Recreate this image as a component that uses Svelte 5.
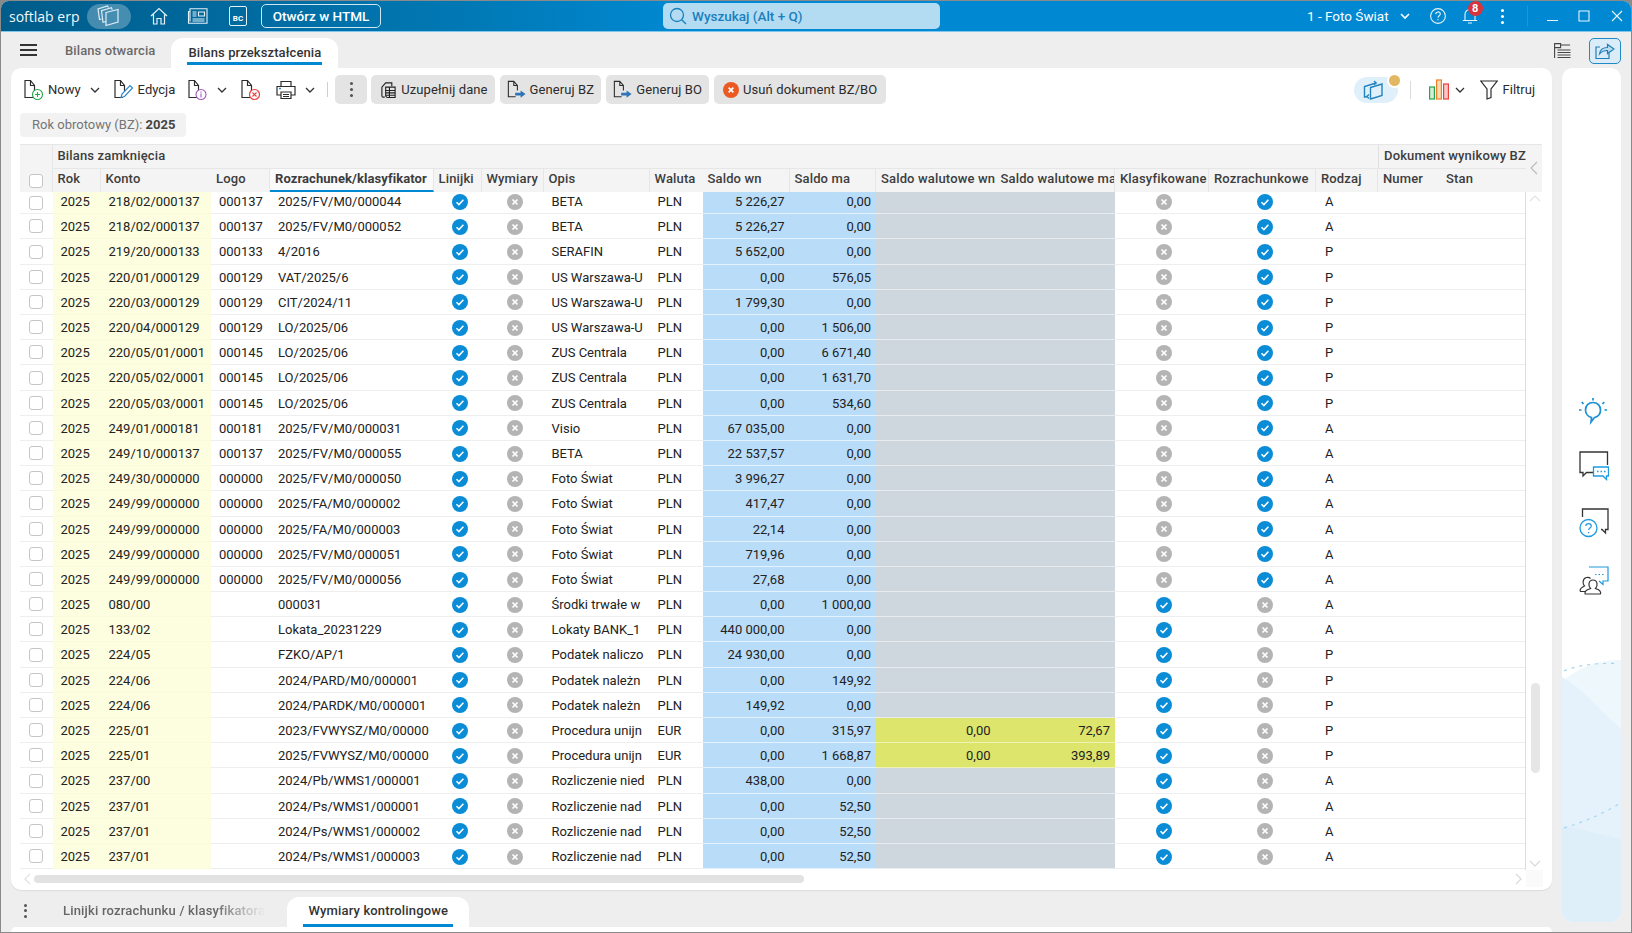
<script lang="ts">
    type Row = {
        konto: string; logo: string; rozr: string; opis: string; wal: string;
        wn: string; ma: string; wwn?: string; wma?: string; klas: boolean; rodzaj: string;
    };

    const r = (konto: string, logo: string, rozr: string, opis: string, wn: string, ma: string, rodzaj: string): Row =>
        ({ konto, logo, rozr, opis, wal: 'PLN', wn, ma, klas: logo === '', rodzaj });

    const rows: Row[] = [
        r('218/02/000137', '000137', '2025/FV/M0/000044', 'BETA', '5 226,27', '0,00', 'A'),
        r('218/02/000137', '000137', '2025/FV/M0/000052', 'BETA', '5 226,27', '0,00', 'A'),
        r('219/20/000133', '000133', '4/2016', 'SERAFIN', '5 652,00', '0,00', 'P'),
        r('220/01/000129', '000129', 'VAT/2025/6', 'US Warszawa-U', '0,00', '576,05', 'P'),
        r('220/03/000129', '000129', 'CIT/2024/11', 'US Warszawa-U', '1 799,30', '0,00', 'P'),
        r('220/04/000129', '000129', 'LO/2025/06', 'US Warszawa-U', '0,00', '1 506,00', 'P'),
        r('220/05/01/0001', '000145', 'LO/2025/06', 'ZUS Centrala', '0,00', '6 671,40', 'P'),
        r('220/05/02/0001', '000145', 'LO/2025/06', 'ZUS Centrala', '0,00', '1 631,70', 'P'),
        r('220/05/03/0001', '000145', 'LO/2025/06', 'ZUS Centrala', '0,00', '534,60', 'P'),
        r('249/01/000181', '000181', '2025/FV/M0/000031', 'Visio', '67 035,00', '0,00', 'A'),
        r('249/10/000137', '000137', '2025/FV/M0/000055', 'BETA', '22 537,57', '0,00', 'A'),
        r('249/30/000000', '000000', '2025/FV/M0/000050', 'Foto Świat', '3 996,27', '0,00', 'A'),
        r('249/99/000000', '000000', '2025/FA/M0/000002', 'Foto Świat', '417,47', '0,00', 'A'),
        r('249/99/000000', '000000', '2025/FA/M0/000003', 'Foto Świat', '22,14', '0,00', 'A'),
        r('249/99/000000', '000000', '2025/FV/M0/000051', 'Foto Świat', '719,96', '0,00', 'A'),
        r('249/99/000000', '000000', '2025/FV/M0/000056', 'Foto Świat', '27,68', '0,00', 'A'),
        r('080/00', '', '000031', 'Środki trwałe w', '0,00', '1 000,00', 'A'),
        r('133/02', '', 'Lokata_20231229', 'Lokaty BANK_1', '440 000,00', '0,00', 'A'),
        r('224/05', '', 'FZKO/AP/1', 'Podatek naliczo', '24 930,00', '0,00', 'P'),
        r('224/06', '', '2024/PARD/M0/000001', 'Podatek należn', '0,00', '149,92', 'P'),
        r('224/06', '', '2024/PARDK/M0/000001', 'Podatek należn', '149,92', '0,00', 'P'),
        { ...r('225/01', '', '2023/FVWYSZ/M0/00000', 'Procedura unijn', '0,00', '315,97', 'P'), wal: 'EUR', wwn: '0,00', wma: '72,67' },
        { ...r('225/01', '', '2025/FVWYSZ/M0/00000', 'Procedura unijn', '0,00', '1 668,87', 'P'), wal: 'EUR', wwn: '0,00', wma: '393,89' },
        r('237/00', '', '2024/Pb/WMS1/000001', 'Rozliczenie nied', '438,00', '0,00', 'A'),
        r('237/01', '', '2024/Ps/WMS1/000001', 'Rozliczenie nad', '0,00', '52,50', 'A'),
        r('237/01', '', '2024/Ps/WMS1/000002', 'Rozliczenie nad', '0,00', '52,50', 'A'),
        r('237/01', '', '2024/Ps/WMS1/000003', 'Rozliczenie nad', '0,00', '52,50', 'A')
    ];

    const columns = [
        ['Rok', ''], ['Konto', 'nosep'], ['Logo', ''], ['Rozrachunek/klasyfikator', 'sorted'], ['Linijki', ''],
        ['Wymiary', ''], ['Opis', ''], ['Waluta', 'nosep'], ['Saldo wn', ''], ['Saldo ma', ''],
        ['Saldo walutowe wn', 'nosep'], ['Saldo walutowe ma', ''], ['Klasyfikowane', ''], ['Rozrachunkowe', ''],
        ['Rodzaj', ''], ['Numer', 'nosep'], ['Stan', 'nosep']
    ];
</script>

{#snippet chevron()}
    <svg class="chev" width="10" height="6" viewBox="0 0 10 6"><path d="M1 1l4 4 4-4" fill="none" stroke="#333" stroke-width="1.300"/></svg>
{/snippet}

{#snippet page()}
    <path d="M10.500 12V6.500L6.500 1.500H1v17h8M6.500 1.500v5h4" fill="none" stroke="#2c2c2c" stroke-width="1.200"/>
{/snippet}

{#snippet docarrow()}
    <svg width="19" height="22" viewBox="0 0 21 23">
        <path d="M11.500 12V6.500L7.500 2H1.500v17h8M7.500 2v4.500h4" fill="none" stroke="#2c2c2c" stroke-width="1.200"/>
        <path d="M9 14.500h6V12l5.500 4-5.500 4v-2.500H9z" fill="#2e74b8"/>
    </svg>
{/snippet}

{#snippet ok()}
    <svg class="st" width="16" height="16" viewBox="0 0 16 16"><circle cx="8" cy="8" r="8" fill="#0a8cd6"/><path d="M4.500 8.300l2.400 2.300 4.500-4.800" fill="none" stroke="#fff" stroke-width="1.500"/></svg>
{/snippet}

{#snippet no()}
    <svg class="st" width="16" height="16" viewBox="0 0 16 16"><circle cx="8" cy="8" r="8" fill="#b4b4b4"/><path d="M5.500 5.500l5 5m0-5l-5 5" fill="none" stroke="#fff" stroke-width="1.700"/></svg>
{/snippet}

<div class="app">
    <div class="win">
        <header class="top">
            <span class="logo">softlab erp</span>
            <span class="pill">
                <svg width="28" height="24" viewBox="0 0 28 24" fill="none" stroke="#dcecf5" stroke-width="1.200">
                    <path d="M11 8.500l12-3v12.500l-12 3.500z"/>
                    <path d="M11 17.500l-3 .8-1.500-11.500 10-3 .7 2"/>
                    <path d="M6.500 15l-2 .5-1.500-10.500 9.500-3 1 1.500"/>
                </svg>
            </span>
            <svg class="ti home" width="18" height="18" viewBox="0 0 18 18" fill="none" stroke="#e4f1f8" stroke-width="1.200"><path d="M1 9l8-7.500L17 9M3.500 7.500V17h3.500v-5.500h4V17h3.500V7.500"/></svg>
            <svg class="ti news" width="21" height="16" viewBox="0 0 21 16" fill="none" stroke="#e4f1f8" stroke-width="1.100"><path d="M3 .8h17v14.400H1.500V3.500H3zM3 3.500v10"/><path d="M11.500 4h6v4h-6zM5.500 4h4M5.500 6h4M5.500 8h4M5.500 11h12M5.500 13h12"/></svg>
            <span class="bc">BC</span>
            <button class="html">Otwórz w HTML</button>
            <div class="search">
                <svg width="18" height="18" viewBox="0 0 18 18" fill="none" stroke="#1a80bd" stroke-width="1.300"><circle cx="8" cy="8" r="6.500"/><path d="M12.700 12.700l4.300 4.300"/></svg>
                <span>Wyszukaj (Alt + Q)</span>
            </div>
            <div class="top-right">
                <span class="company">1 - Foto Świat</span>
                <svg class="c1" width="10" height="7" viewBox="0 0 10 7"><path d="M1 1l4 4 4-4" fill="none" stroke="#fff" stroke-width="1.600"/></svg>
                <svg class="c2" width="16" height="16" viewBox="0 0 16 16" fill="none" stroke="#e8f4fb" stroke-width="1.100"><circle cx="8" cy="8" r="7.400"/><path d="M5.800 6.200c0-3 4.500-3 4.500-.2 0 1.800-2.300 1.800-2.300 3.800M8 11v1.300"/></svg>
                <span class="bell">
                    <svg width="16" height="18" viewBox="0 0 16 18" fill="none" stroke="#e8f4fb" stroke-width="1.100"><path d="M3 13V7.500C3 4.500 5 2.500 8 2.500s5 2 5 5V13M.8 13.500h14.400M6 16h4"/></svg>
                    <b>8</b>
                </span>
                <span class="vdots"><i></i><i></i><i></i></span>
                <span class="vsep"></span>
                <svg class="w1" width="12" height="12" viewBox="0 0 12 12"><path d="M0 10.500h11" stroke="#e8f4fb" stroke-width="1.100"/></svg>
                <svg class="w2" width="12" height="12" viewBox="0 0 12 12"><path d="M1 1h10v10H1z" fill="none" stroke="#e8f4fb" stroke-width="1.100"/></svg>
                <svg class="w3" width="12" height="12" viewBox="0 0 12 12"><path d="M1 1l10 10m0-10L1 11" fill="none" stroke="#e8f4fb" stroke-width="1.100"/></svg>
            </div>
        </header>

        <nav class="tabs">
            <span class="burger"><i></i><i></i><i></i></span>
            <span class="tab">Bilans otwarcia</span>
            <span class="tab active"><span>Bilans przekształcenia</span></span>
            <svg class="tree" width="17" height="16" viewBox="0 0 17 16" fill="none" stroke="#444" stroke-width="1.100"><path d="M.6 .6h6v4h-6zM6.600 2h9.500M.6 4.600V15M3.500 7h13M3.500 9.500h13M3.500 12h13M3.500 14.500h13"/></svg>
            <span class="share">
                <svg width="20" height="18" viewBox="0 0 20 18" fill="none" stroke="#1f7fb8" stroke-width="1.200"><path d="M14 11v5.500H1V5h4"/><path d="M4.500 12c.5-4 3.500-6.500 8-6.500V2.500L19 7l-6.500 4.500V8.500c-3.500 0-6 1-8 3.500z" fill="#bcdcf0"/></svg>
            </span>
        </nav>

        <div class="work">
            <div class="left">
                <section class="panel">
                    <div class="toolbar">
                        <span class="item first">
                            <svg width="20" height="22" viewBox="0 0 20 22">
                                {@render page()}
                                <circle cx="13.500" cy="15.500" r="5" fill="#fff" stroke="#22a84a" stroke-width="1.100"/>
                                <path d="M13.500 13v5M11 15.500h5" stroke="#22a84a" stroke-width="1.100"/>
                            </svg>
                            Nowy
                        </span>
                        {@render chevron()}
                        <span class="item edit">
                            <svg width="20" height="22" viewBox="0 0 20 22">
                                {@render page()}
                                <path d="M7 18.500l1-3.500 8-8.500 2.500 2.500-8 8.500z" fill="#fff" stroke="#2d86cc" stroke-width="1.200"/>
                            </svg>
                            Edycja
                        </span>
                        <span class="item info">
                            <svg width="20" height="22" viewBox="0 0 20 22">
                                {@render page()}
                                <circle cx="13" cy="15.500" r="5" fill="#fff" stroke="#a258b8" stroke-width="1.100"/>
                                <path d="M13 14.500v4M13 12.500v1.200" stroke="#a258b8" stroke-width="1.100"/>
                            </svg>
                        </span>
                        {@render chevron()}
                        <span class="item del">
                            <svg width="20" height="22" viewBox="0 0 20 22">
                                {@render page()}
                                <circle cx="13.500" cy="15.500" r="5" fill="#fff" stroke="#e8413e" stroke-width="1.200"/>
                                <path d="M11.500 13.500l4 4m0-4l-4 4" stroke="#e8413e" stroke-width="1.200"/>
                            </svg>
                        </span>
                        <span class="item print">
                            <svg width="20" height="20" viewBox="0 0 20 20" fill="none" stroke="#2c2c2c" stroke-width="1.200">
                                <path d="M5 6V1.500h10V6M5 15H1V6.500h18V15h-4"/>
                                <path d="M5 12h10v6.500H5zM7 14.500h6M7 16.500h6"/>
                                <path d="M3 8.500h2" stroke="#2d86cc" stroke-width="1.500"/>
                            </svg>
                        </span>
                        {@render chevron()}
                        <span class="tsep"></span>
                        <button class="btn dots"><span class="vdots dark"><i></i><i></i><i></i></span></button>
                        <button class="btn fill">
                            <svg width="17" height="18" viewBox="0 0 18 18" fill="none" stroke="#222" stroke-width="1.200"><path d="M5 16.500H3.500c-1 0-1.500-.5-1.500-1.500V6l4-4.500h6.500V5"/><path d="M6 6h10v11H7.500L6 15.500zM6 9.500h10M6 12h10M6 14.500h10M10 6v11"/></svg>
                            Uzupełnij dane
                        </button>
                        <button class="btn gen">
                            {@render docarrow()}
                            Generuj BZ
                        </button>
                        <button class="btn gen">
                            {@render docarrow()}
                            Generuj BO
                        </button>
                        <button class="btn rem">
                            <svg width="16" height="16" viewBox="0 0 17 17"><circle cx="8.500" cy="8.500" r="8.500" fill="#ea5a22"/><path d="M6 6l5 5m0-5l-5 5" stroke="#fff" stroke-width="1.800"/></svg>
                            Usuń dokument BZ/BO
                        </button>

                        <span class="spring"></span>
                        <span class="view">
                            <svg width="24" height="24" viewBox="0 0 24 24" fill="none" stroke="#2483bd" stroke-width="1.400">
                                <path d="M9.500 9.500L21 6v11.500L9.500 21z"/>
                                <path d="M6 18.500l-2.500.7V8.500L15 5"/>
                                <path d="M13 3l2.200 2L13 6.800M8 16.500L5.800 18.500 8 20.500"/>
                            </svg>
                            <i class="dot"></i>
                        </span>
                        <span class="tsep right"></span>
                        <svg class="chart" width="20" height="21" viewBox="0 0 20 21" stroke-width="1.200">
                            <rect x=".6" y="8" width="4.800" height="12" fill="#d6eed9" stroke="#22a84a"/>
                            <rect x="7.600" y="1" width="4.800" height="19" fill="#fbdcb8" stroke="#f07f25"/>
                            <rect x="14.600" y="5" width="4.800" height="15" fill="#f9c9c9" stroke="#e8413e"/>
                        </svg>
                        {@render chevron()}
                        <span class="item filter">
                            <svg width="18" height="20" viewBox="0 0 18 20" fill="none" stroke="#2c2c2c" stroke-width="1.200"><path d="M.8 1h16.400L11 9v8.500l-4 1.500V9z"/></svg>
                            Filtruj
                        </span>
                    </div>

                    <div class="chip">Rok obrotowy (BZ): <b>2025</b></div>

                    <div class="tbl">
                        <div class="head">
                            <div class="h-check"><span class="cb"></span></div>
                            <div class="group g1">Bilans zamknięcia</div>
                            <div class="group g2">Dokument wynikowy BZ</div>
                            <div class="h-nav">
                                <svg width="8" height="14" viewBox="0 0 8 14"><path d="M7 1L1 7l6 6" fill="none" stroke="#bbb" stroke-width="1.200"/></svg>
                            </div>
                            {#each columns as [label, kind]}
                                <div class="hc {kind}">{label}</div>
                            {/each}
                        </div>
                        <div class="mid">
                            <div class="rows">
                                {#each rows as row}
                                    <div class="row">
                                        <div class="c chk"><span class="cb"></span></div>
                                        <div class="c y">2025</div>
                                        <div class="c y">{row.konto}</div>
                                        <div class="c">{row.logo}</div>
                                        <div class="c">{row.rozr}</div>
                                        <div class="c ic">{@render ok()}</div>
                                        <div class="c ic">{@render no()}</div>
                                        <div class="c">{row.opis}</div>
                                        <div class="c">{row.wal}</div>
                                        <div class="c num b">{row.wn}</div>
                                        <div class="c num b">{row.ma}</div>
                                        <div class="c num {row.wwn ? 'lime' : 'grey'}">{row.wwn ?? ''}</div>
                                        <div class="c num {row.wma ? 'lime' : 'grey'}">{row.wma ?? ''}</div>
                                        <div class="c ic">{#if row.klas}{@render ok()}{:else}{@render no()}{/if}</div>
                                        <div class="c ic">{#if row.klas}{@render no()}{:else}{@render ok()}{/if}</div>
                                        <div class="c rodz">{row.rodzaj}</div>
                                        <div class="c"></div>
                                        <div class="c"></div>
                                    </div>
                                {/each}
                            </div>
                            <div class="vs">
                                <svg width="12" height="7" viewBox="0 0 12 7"><path d="M1 6l5-5 5 5" fill="none" stroke="#e2e2e2" stroke-width="1.200"/></svg>
                                <span class="thumb"></span>
                                <svg width="12" height="7" viewBox="0 0 12 7"><path d="M1 1l5 5 5-5" fill="none" stroke="#d8d8d8" stroke-width="1.200"/></svg>
                            </div>
                        </div>
                        <div class="hs">
                            <svg width="7" height="12" viewBox="0 0 7 12"><path d="M6 1L1 6l5 5" fill="none" stroke="#e2e2e2" stroke-width="1.200"/></svg>
                            <span class="hthumb"></span>
                            <svg class="hr" width="7" height="12" viewBox="0 0 7 12"><path d="M1 1l5 5-5 5" fill="none" stroke="#d8d8d8" stroke-width="1.200"/></svg>
                            <span class="corner"></span>
                        </div>
                    </div>
                </section>

                <div class="btabs">
                    <span class="vdots dark small"><i></i><i></i><i></i></span>
                    <span class="btab fade">Linijki rozrachunku / klasyfikatora</span>
                    <span class="btab active"><span>Wymiary kontrolingowe</span></span>
                </div>
                <div class="stub"></div>
            </div>

            <aside class="side">
                <svg class="s1" width="30" height="28" viewBox="0 0 30 28" fill="none" stroke="#1d8fd6" stroke-width="1.700">
                    <path d="M15 3.500V1M5.500 7L3.800 5M24.500 7l1.700-2M1 13h2.500M26.500 13H29"/>
                    <path d="M15 5.500c-4.500 0-7.500 3.200-7.500 7.500 0 4 3 6.800 6 7.500L13 25l3.500-4.500c3.500-.8 6-3.500 6-7.500 0-4.300-3-7.500-7.500-7.500z"/>
                </svg>
                <svg class="s2" width="30" height="30" viewBox="0 0 30 30" fill="none">
                    <path d="M14 21.500H7.500L4 25v-3.500H1V1h27.500v13" stroke="#333" stroke-width="1.300"/>
                    <path d="M14.500 16h15v9h-2v3.500L24 25h-9.500z" fill="#fff" stroke="#1d9ae0" stroke-width="1.300"/>
                    <path d="M18 20.500h1.500M21.500 20.500H23M25 20.500h1.500" stroke="#1d9ae0" stroke-width="1.300"/>
                </svg>
                <svg class="s3" width="30" height="30" viewBox="0 0 30 30" fill="none">
                    <path d="M3.500 9V1h25.500v20.500h-2.500V25l-3.500-3.500h-1" stroke="#333" stroke-width="1.300"/>
                    <circle cx="9.500" cy="20" r="8.500" fill="#fff" stroke="#1d9ae0" stroke-width="1.300"/>
                    <path d="M6.800 18c0-3.300 5.500-3.300 5.500 0 0 2-2.700 2-2.700 4M9.600 24v1.200" stroke="#1d9ae0" stroke-width="1.200"/>
                </svg>
                <svg class="s4" width="30" height="30" viewBox="0 0 30 30" fill="none">
                    <path d="M10 1h19v14h-5v3.500l-4-3.500" fill="#fff" stroke="#1d9ae0" stroke-width="1.200"/>
                    <path d="M16 8.500h1.500M19.500 8.500H21M23 8.500h1.500" stroke="#1d9ae0" stroke-width="1.200"/>
                    <path d="M6 25.500H2c-1.500 0-1-3 1-4l2.500-1.500c-2-2-2.300-7.500 2-8.500 2-.5 3.500.5 4 1" stroke="#333" stroke-width="1.200"/>
                    <path d="M6.500 28h14.500c1 0 1-3-1.500-4.200l-3-1.300c2.500-2.500 2.300-8.500-2.500-8.500s-5 6-2.500 8.500l-3.500 1.500C6 25 5.500 28 6.500 28z" fill="#fff" stroke="#333" stroke-width="1.200"/>
                </svg>
                <svg class="waves" width="59" height="262" viewBox="0 0 59 262" preserveAspectRatio="none">
                    <path d="M0 22C15 8 35 0 59 0v262H0z" fill="#eef7fc"/>
                    <path d="M0 17c22 12 40 36 59 52v193H0z" fill="#e5f2fb"/>
                    <path d="M0 165l59 14v83H0z" fill="#dfeff9"/>
                    <path d="M2 11C18 4 38 3 57 3.500M2 168c20-6 38-14 55-24" fill="none" stroke="#9fd4f2" stroke-width="1.100" stroke-dasharray="3 5"/>
                </svg>
            </aside>
        </div>
    </div>
</div>

<style>
    :global(body) {
        margin: 0;
        background: #8a8a8a;
    }

    .app {
        width: 1632px;
        height: 933px;
        padding: 1px;
        box-sizing: border-box;
        font-family: Roboto, "Liberation Sans", sans-serif;
        font-size: 13px;
        color: #222;
        overflow: hidden;
    }

    .win {
        height: 931px;
        background: #eeeeee;
        border-radius: 8px 8px 0 0;
        overflow: hidden;
        display: flex;
        flex-direction: column;
    }

    .top {
        height: 31px;
        flex: none;
        box-sizing: border-box;
        display: flex;
        align-items: center;
        background: linear-gradient(90deg, #005c8a 0%, #0178b4 28%, #0089d2 42%, #0089d2 100%);
        border-bottom: 1px solid #7fc6ec;
        color: #fff;
        position: relative;
    }

    .logo {
        font-family: "Open Sans", sans-serif;
        font-size: 14px;
        margin-left: 8px;
        width: 78px;
        white-space: nowrap;
        color: #f2f8fb;
    }

    .pill {
        width: 44px;
        height: 25px;
        border-radius: 13px;
        background: rgba(255, 255, 255, 0.27);
        display: flex;
        align-items: center;
        justify-content: center;
    }

    .ti.home {
        margin-left: 19px;
    }

    .ti.news {
        margin-left: 19px;
    }

    .bc {
        width: 16px;
        height: 17px;
        margin-left: 21px;
        border: 1px solid #e4f1f8;
        border-radius: 2px;
        font-size: 8px;
        font-weight: 700;
        display: flex;
        align-items: flex-end;
        justify-content: center;
        padding-bottom: 1px;
        line-height: 10px;
    }

    .html {
        margin-left: 14px;
        width: 120px;
        height: 24px;
        border: 1.5px solid #cfe6f1;
        border-radius: 5px;
        background: transparent;
        color: #fff;
        font: 500 13.5px Roboto, sans-serif;
        padding: 0;
    }

    .search {
        margin-left: 282px;
        width: 277px;
        height: 26px;
        background: #b3dcf3;
        border-radius: 5px;
        display: flex;
        align-items: center;
        gap: 5px;
        padding-left: 6px;
        box-sizing: border-box;
        color: #1a80bd;
        font-size: 13.5px;
        font-weight: 500;
    }

    .top-right {
        flex: 1;
        display: flex;
        align-items: center;
        padding-left: 367px;
    }

    .company {
        font-size: 13.5px;
        white-space: nowrap;
    }

    .c1 { margin-left: 11px; }
    .c2 { margin-left: 20px; }

    .bell {
        margin-left: 16px;
        position: relative;
        display: flex;
    }

    .bell b {
        position: absolute;
        left: 6px;
        top: -6px;
        width: 15px;
        height: 15px;
        border-radius: 50%;
        background: #d8343e;
        color: #fff;
        font-size: 11px;
        line-height: 15px;
        text-align: center;
    }

    .vdots {
        display: flex;
        flex-direction: column;
        gap: 3px;
        margin-left: 23px;
    }

    .vdots i {
        width: 3px;
        height: 3px;
        border-radius: 50%;
        background: #fff;
    }

    .vdots.dark {
        margin-left: 0;
    }

    .vdots.dark i {
        background: #555;
    }

    .vsep {
        width: 1px;
        height: 20px;
        background: rgba(255, 255, 255, 0.12);
        margin-left: 23px;
    }

    .w1 { margin-left: 19px; }
    .w2 { margin-left: 19px; }
    .w3 { margin-left: 21px; }

    .tabs {
        height: 36px;
        flex: none;
        display: flex;
        align-items: center;
        position: relative;
    }

    .burger {
        margin-left: 19px;
        width: 17px;
        display: flex;
        flex-direction: column;
        gap: 3px;
    }

    .burger i {
        height: 2px;
        background: #333;
    }

    .tab {
        margin-left: 28px;
        font-weight: 500;
        color: #6a6a6a;
        font-size: 13px;
        white-space: nowrap;
        letter-spacing: 0.1px;
    }

    .tab.active {
        margin-left: 16px;
        align-self: flex-end;
        height: 30px;
        box-sizing: border-box;
        padding: 0 16px;
        background: #fff;
        border-radius: 12px 12px 0 0;
        color: #333;
        display: flex;
    }

    .tab.active span {
        border-bottom: 3px solid #0089d2;
        padding: 3px 1px 0;
        line-height: 24px;
        height: 27px;
        box-sizing: border-box;
    }

    .tree {
        margin-left: auto;
        margin-top: 1px;
    }

    .share {
        margin: 1px 10px 0 18px;
        width: 32px;
        height: 26px;
        box-sizing: border-box;
        border: 1px solid #1f8ac4;
        border-radius: 5px;
        background: #d9ecf8;
        display: flex;
        align-items: center;
        justify-content: center;
    }

    .work {
        flex: 1;
        display: flex;
        min-height: 0;
    }

    .left {
        width: 1551px;
        flex: none;
        display: flex;
        flex-direction: column;
    }

    .panel {
        margin-left: 10px;
        width: 1541px;
        height: 822px;
        box-sizing: border-box;
        background: #fff;
        border-radius: 10px;
        box-shadow: 0 1px 1px #dcdcdc;
        padding: 7px 0 0 9px;
        display: flex;
        flex-direction: column;
    }

    .toolbar {
        height: 29px;
        display: flex;
        align-items: center;
        padding-right: 17px;
        flex: none;
    }

    .item {
        display: flex;
        align-items: center;
        gap: 4px;
        color: #2b2b2b;
        white-space: nowrap;
    }

    .item.first { margin-left: 4px; }
    .chev { flex: none; margin-left: 9px; }
    .item.edit { margin-left: 14px; }
    .item.info { margin-left: 13px; }
    .item.del { margin-left: 14px; }
    .item.print { margin-left: 15px; }

    .tsep {
        width: 1px;
        height: 15px;
        background: #cfcfcf;
        margin-left: 12px;
        margin-right: 7px;
    }

    .btn {
        height: 29px;
        border: 0;
        border-radius: 5px;
        background: #e4e4e4;
        color: #2b2b2b;
        font: 13px Roboto, sans-serif;
        display: flex;
        align-items: center;
        gap: 4px;
        margin-right: 5px;
        white-space: nowrap;
        letter-spacing: 0.1px;
    }

    .btn.dots {
        width: 32px;
        padding: 0;
        justify-content: center;
        margin-right: 4px;
    }

    .btn.fill { padding: 0 7px 0 9px; }
    .btn.gen { padding: 0 7px; }
    .btn.rem { padding: 0 9px 0 9px; }

    .spring {
        flex: 1;
    }

    .view {
        position: relative;
        width: 44px;
        height: 26px;
        border-radius: 13px;
        background: #dff0fa;
        display: flex;
        align-items: center;
        justify-content: center;
        padding-right: 6px;
        box-sizing: border-box;
    }

    .dot {
        position: absolute;
        right: -2px;
        top: -2px;
        width: 11px;
        height: 11px;
        border-radius: 50%;
        background: #e3b662;
        box-shadow: 0 0 0 2px #fff;
    }

    .tsep.right {
        margin-left: 12px;
        margin-right: 18px;
        height: 18px;
        background: #dcdcdc;
    }

    .chart {
        flex: none;
        margin-right: -3px;
    }

    .item.filter {
        margin-left: 15px;
        gap: 5px;
    }

    .chip {
        margin-top: 9px;
        width: 166px;
        height: 24px;
        box-sizing: border-box;
        background: #f2f2f2;
        border-radius: 4px;
        line-height: 24px;
        padding-left: 12px;
        color: #757575;
        flex: none;
    }

    .chip b {
        color: #444;
        font-weight: 700;
    }

    .tbl {
        --cols: 32.5px 48px 110.5px 59px 163.5px 48px 62px 106px 53px 87px 86.5px 119.5px 119.5px 94px 107px 62px 63px 84.5px;
        margin-top: 6.5px;
        flex: 1;
        min-height: 0;
        display: flex;
        flex-direction: column;
    }

    .head {
        display: grid;
        grid-template-columns: var(--cols) 17px;
        grid-template-rows: 24px 23.5px;
        width: 1522px;
        background: #f4f4f4;
        border-top: 1px solid #e6e6e6;
        box-sizing: border-box;
        flex: none;
    }

    .h-check {
        grid-row: 1 / 3;
        grid-column: 1;
        display: flex;
        justify-content: center;
        align-items: flex-end;
        padding-bottom: 4px;
        border-right: 1px solid #e6e6e6;
        box-sizing: border-box;
    }

    .group {
        line-height: 22px;
        padding-left: 5px;
        font-size: 13px;
        color: #3d3d3d;
        font-weight: 500;
        letter-spacing: 0.15px;
        border-bottom: 1px solid #e6e6e6;
        white-space: nowrap;
        overflow: hidden;
    }

    .g1 { grid-column: 2 / 17; }
    .g2 {
        grid-column: 17 / 19;
        border-left: 1px solid #e0e0e0;
        padding-left: 5px;
    }

    .h-nav {
        grid-column: 19;
        grid-row: 1 / 3;
        display: flex;
        align-items: center;
        justify-content: center;
    }

    .hc {
        padding-left: 5px;
        line-height: 20px;
        color: #3d3d3d;
        font-weight: 500;
        letter-spacing: 0.15px;
        white-space: nowrap;
        overflow: hidden;
        border-right: 1px solid #e6e6e6;
        box-sizing: border-box;
    }

    .hc.nosep {
        border-right-color: transparent;
    }

    .hc.sorted {
        background: #fafafa;
        font-weight: 700;
        letter-spacing: 0.07px;
        border-bottom: 2px solid #0089d2;
    }

    .mid {
        display: flex;
        width: 1532px;
        height: 677.500px;
        flex: none;
    }

    .rows {
        width: 1506px;
        box-sizing: border-box;
        border-right: 1px solid #ddd;
        overflow: hidden;
        flex: none;
    }

    .row {
        display: grid;
        grid-template-columns: var(--cols);
        height: 25.19px;
    }

    .row:first-child {
        height: 22.3px;
    }

    .c {
        padding-left: 8px;
        line-height: 26px;
        border-bottom: 1px solid #eeeeee;
        white-space: nowrap;
        overflow: hidden;
        color: #222;
        box-sizing: border-box;
    }

    .row:first-child .c {
        line-height: 20px;
    }

    .chk {
        padding: 0;
        display: flex;
        justify-content: center;
        align-items: center;
    }

    .cb {
        width: 14px;
        height: 14px;
        box-sizing: border-box;
        background: #fff;
        border: 1px solid #c6c6c6;
        border-radius: 3px;
        display: block;
    }

    .y {
        background: #fdfde0;
        border-bottom-color: #fbfbdc;
    }

    .ic {
        padding: 1px 0 0 4px;
        display: flex;
        justify-content: center;
        align-items: center;
    }

    .row:first-child .ic {
        padding-top: 0;
        padding-bottom: 1px;
    }

    .num {
        padding: 0 5px 0 0;
        text-align: right;
    }

    .b {
        background: #b9dcf9;
        border-bottom-color: #e6f2fb;
    }

    .grey {
        background: #ced7de;
        border-bottom-color: #e8ecef;
    }

    .lime {
        background: #dde56c;
        border-bottom-color: #eef2b4;
    }

    .rodz {
        padding-left: 9px;
    }

    .vs {
        flex: 1;
        display: flex;
        flex-direction: column;
        align-items: flex-start;
        padding-left: 3px;
        position: relative;
    }

    .vs svg:first-child {
        margin-top: 3px;
    }

    .vs svg:last-child {
        margin-top: auto;
        margin-bottom: 3px;
    }

    .thumb {
        width: 9px;
        height: 90px;
        border-radius: 5px;
        background: #e6e6e6;
        margin-top: 481px;
        margin-left: 2px;
    }

    .hs {
        height: 19px;
        width: 1523px;
        display: flex;
        align-items: center;
        position: relative;
        padding-left: 4px;
        box-sizing: border-box;
    }

    .hthumb {
        width: 770px;
        height: 8px;
        border-radius: 4px;
        background: #e2e2e2;
        margin-left: 3px;
    }

    .hr {
        margin-left: auto;
        margin-right: 21px;
    }

    .corner {
        position: absolute;
        right: 0;
        top: 0;
        width: 17px;
        height: 17px;
        background: #fafafa;
    }

    .btabs {
        height: 37px;
        flex: none;
        display: flex;
        align-items: center;
        padding-top: 4px;
        box-sizing: border-box;
    }

    .vdots.small {
        margin-left: 23px;
        gap: 2.500px;
    }

    .btab {
        font-weight: 500;
        color: #666;
        white-space: nowrap;
    }

    .btab.fade {
        margin-left: 36px;
        letter-spacing: 0.18px;
        -webkit-mask-image: linear-gradient(90deg, #000 75%, transparent 100%);
        mask-image: linear-gradient(90deg, #000 75%, transparent 100%);
    }

    .btab.active {
        margin-left: 22px;
        align-self: flex-end;
        height: 30px;
        width: 182px;
        box-sizing: border-box;
        background: #fff;
        border-radius: 12px 12px 0 0;
        display: flex;
        justify-content: center;
        color: #333;
        letter-spacing: 0.15px;
    }

    .btab.active span {
        width: 150px;
        text-align: center;
        height: 30px;
        line-height: 28px;
        box-sizing: border-box;
        border-bottom: 3px solid #0089d2;
    }

    .stub {
        margin-left: 10px;
        height: 5px;
        background: #fff;
        border-radius: 8px 8px 0 0;
    }

    .side {
        position: relative;
        margin-left: 10px;
        width: 59px;
        height: 854px;
        background: #fff;
        border-radius: 10px;
        overflow: hidden;
    }

    .side svg {
        position: absolute;
    }

    .s1 { left: 16px; top: 329px; }
    .s2 { left: 17px; top: 383px; }
    .s3 { left: 17px; top: 440px; }
    .s4 { left: 17px; top: 498px; }

    .waves {
        left: 0;
        bottom: 0;
    }
</style>
